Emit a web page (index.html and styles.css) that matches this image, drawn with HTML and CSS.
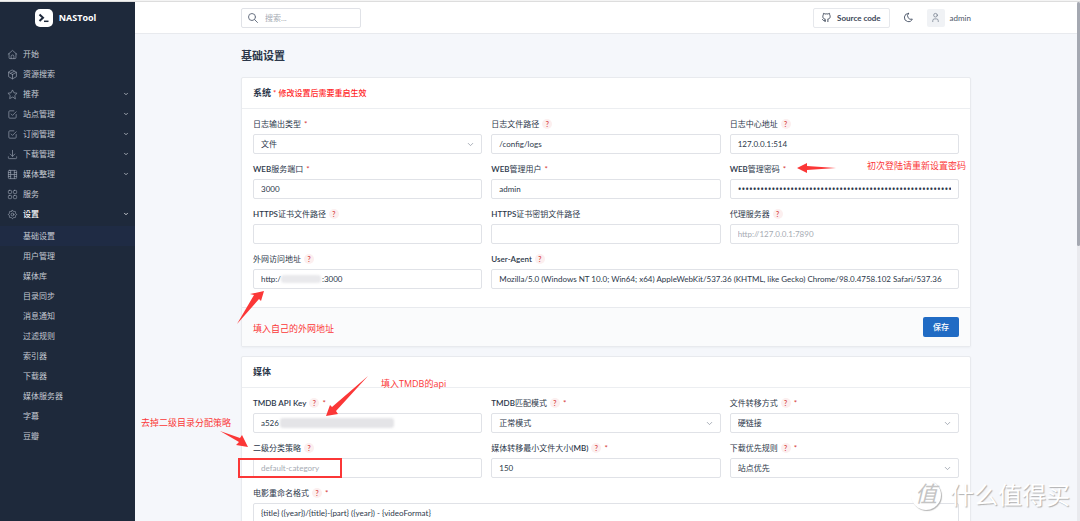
FILE: index.html
```html
<!DOCTYPE html>
<html lang="zh-CN">
<head>
<meta charset="utf-8">
<meta name="viewport" content="width=device-width, initial-scale=1">
<title>NASTool - 基础设置</title>
<link rel="stylesheet" href="styles.css">
</head>
<body>
<svg class="sprite" aria-hidden="true">
  <symbol id="i-chevron" viewBox="0 0 24 24"><path d="M6 9l6 6l6-6"/></symbol>
  <symbol id="i-home" viewBox="0 0 24 24"><path d="M2.500 11.500L12 3l9.500 8.500M4.500 10v9a2 2 0 0 0 2 2h11a2 2 0 0 0 2-2v-9M9 21v-5a3 3 0 0 1 6 0v5"/></symbol>
  <symbol id="i-box" viewBox="0 0 24 24"><path d="M12 2.500l8.500 4.700v9.600L12 21.500l-8.500-4.700V7.200zM12 12l8.500-4.800M12 12v9.500M12 12L3.500 7.200M16 4.800L7.700 9.500"/></symbol>
  <symbol id="i-star" viewBox="0 0 24 24"><path d="M12 17.750l-6.172 3.245l1.179-6.873l-5-4.867l6.900-1l3.086-6.253l3.086 6.253l6.900 1l-5 4.867l1.179 6.873z"/></symbol>
  <symbol id="i-check" viewBox="0 0 24 24"><path d="M9 11l3 3l8-8M20 12v6a2 2 0 0 1-2 2H6a2 2 0 0 1-2-2V6a2 2 0 0 1 2-2h9"/></symbol>
  <symbol id="i-download" viewBox="0 0 24 24"><path d="M3 17v2a2 2 0 0 0 2 2h14a2 2 0 0 0 2-2v-2M7 11l5 5l5-5M12 3v13"/></symbol>
  <symbol id="i-movie" viewBox="0 0 24 24"><path d="M5 3h14a2 2 0 0 1 2 2v14a2 2 0 0 1-2 2H5a2 2 0 0 1-2-2V5a2 2 0 0 1 2-2zM8 3v18M16 3v18M3 12h18M3 7.500h5M3 16.500h5M16 7.500h5M16 16.500h5"/></symbol>
  <symbol id="i-grid" viewBox="0 0 24 24"><rect x="3" y="3" width="7" height="7" rx="2"/><rect x="14" y="3" width="7" height="7" rx="2"/><rect x="3" y="14" width="7" height="7" rx="2"/><rect x="14" y="14" width="7" height="7" rx="2"/></symbol>
  <symbol id="i-gear" viewBox="0 0 24 24"><path d="M10.325 4.317c.426-1.756 2.924-1.756 3.350 0a1.724 1.724 0 0 0 2.573 1.066c1.543-.940 3.310.826 2.370 2.370a1.724 1.724 0 0 0 1.065 2.572c1.756.426 1.756 2.924 0 3.350a1.724 1.724 0 0 0-1.066 2.573c.940 1.543-.826 3.310-2.370 2.370a1.724 1.724 0 0 0-2.572 1.065c-.426 1.756-2.924 1.756-3.350 0a1.724 1.724 0 0 0-2.573-1.066c-1.543.940-3.310-.826-2.370-2.370a1.724 1.724 0 0 0-1.065-2.572c-1.756-.426-1.756-2.924 0-3.350a1.724 1.724 0 0 0 1.066-2.573c-.940-1.543.826-3.310 2.370-2.370c1 .608 2.296.070 2.572-1.065z"/><circle cx="12" cy="12" r="3"/></symbol>
  <symbol id="i-search" viewBox="0 0 24 24"><circle cx="10" cy="10" r="7"/><path d="M21 21l-6-6"/></symbol>
  <symbol id="i-github" viewBox="0 0 24 24"><path d="M9 19c-4.300 1.400-4.300-2.500-6-3m12 5v-3.500c0-1 .1-1.400-.5-2c2.800-.3 5.500-1.400 5.500-6a4.600 4.600 0 0 0-1.300-3.200a4.200 4.200 0 0 0-.1-3.200s-1.100-.3-3.500 1.300a12.300 12.300 0 0 0-6.200 0C6.500 2.800 5.400 3.100 5.400 3.100a4.200 4.200 0 0 0-.1 3.200A4.600 4.600 0 0 0 4 9.500c0 4.600 2.700 5.700 5.500 6c-.6.6-.6 1.200-.5 2V21"/></symbol>
  <symbol id="i-moon" viewBox="0 0 24 24"><path d="M12 3h.393a7.500 7.500 0 0 0 7.920 12.446A9 9 0 1 1 12 2.992z"/></symbol>
  <symbol id="i-user" viewBox="0 0 24 24"><circle cx="12" cy="7" r="4"/><path d="M6 21v-2a4 4 0 0 1 4-4h4a4 4 0 0 1 4 4v2"/></symbol>
</svg>

<div class="window-edge"></div>
<div class="shell">
  <aside class="sidebar">
    <a class="brand" href="#">
      <svg class="brand-logo" viewBox="0 0 18 18" aria-hidden="true"><rect width="18" height="18" rx="5" fill="#fff"/><path d="M4.500 5.500L8 8.800L4.500 12" fill="none" stroke="#1e293b" stroke-width="2"/><path d="M9 12.300h4.500" stroke="#1e293b" stroke-width="1.500"/></svg>
      <span>NASTool</span>
    </a>
    <nav class="menu">
      <a href="#"><svg class="icon"><use href="#i-home"/></svg><span>开始</span></a>
      <a href="#"><svg class="icon"><use href="#i-box"/></svg><span>资源搜索</span></a>
      <a href="#"><svg class="icon"><use href="#i-star"/></svg><span>推荐</span><svg class="caret"><use href="#i-chevron"/></svg></a>
      <a href="#"><svg class="icon"><use href="#i-check"/></svg><span>站点管理</span><svg class="caret"><use href="#i-chevron"/></svg></a>
      <a href="#"><svg class="icon"><use href="#i-check"/></svg><span>订阅管理</span><svg class="caret"><use href="#i-chevron"/></svg></a>
      <a href="#"><svg class="icon"><use href="#i-download"/></svg><span>下载管理</span><svg class="caret"><use href="#i-chevron"/></svg></a>
      <a href="#"><svg class="icon"><use href="#i-movie"/></svg><span>媒体整理</span><svg class="caret"><use href="#i-chevron"/></svg></a>
      <a href="#"><svg class="icon"><use href="#i-grid"/></svg><span>服务</span></a>
      <a class="open" href="#"><svg class="icon"><use href="#i-gear"/></svg><span>设置</span><svg class="caret"><use href="#i-chevron"/></svg></a>
      <div class="submenu">
        <a class="active" href="#">基础设置</a>
        <a href="#">用户管理</a>
        <a href="#">媒体库</a>
        <a href="#">目录同步</a>
        <a href="#">消息通知</a>
        <a href="#">过滤规则</a>
        <a href="#">索引器</a>
        <a href="#">下载器</a>
        <a href="#">媒体服务器</a>
        <a href="#">字幕</a>
        <a href="#">豆瓣</a>
      </div>
    </nav>
  </aside>

  <div class="content">
    <header class="topbar">
      <div class="container topbar-row">
        <label class="search"><svg class="icon"><use href="#i-search"/></svg><input type="text" placeholder="搜索..." aria-label="搜索"></label>
        <div class="tools">
          <a class="source" href="#"><svg class="icon"><use href="#i-github"/></svg>Source code</a>
          <button class="theme" type="button" aria-label="切换主题"><svg class="icon"><use href="#i-moon"/></svg></button>
          <a class="user" href="#"><span class="avatar"><svg class="icon"><use href="#i-user"/></svg></span>admin</a>
        </div>
      </div>
    </header>

    <main class="container page">
      <h1>基础设置</h1>

      <form class="card">
        <div class="card-head"><h2>系统</h2><strong>* 修改设置后需要重启生效</strong></div>
        <div class="card-body">
          <div class="field"><label for="logtype">日志输出类型 <i>*</i></label><div class="pick"><select id="logtype"><option>文件</option></select><svg><use href="#i-chevron"/></svg></div></div>
          <div class="field"><label for="logpath">日志文件路径 <b>?</b></label><input id="logpath" type="text" value="/config/logs"></div>
          <div class="field"><label for="logserver">日志中心地址 <b>?</b></label><input id="logserver" type="text" value="127.0.0.1:514"></div>
          <div class="field"><label for="port"><span><em>WEB</em>服务端口</span> <i>*</i></label><input id="port" type="text" value="3000"></div>
          <div class="field"><label for="webuser"><span><em>WEB</em>管理用户</span> <i>*</i></label><input id="webuser" type="text" value="admin"></div>
          <div class="field"><label for="webpass"><span><em>WEB</em>管理密码</span> <i>*</i></label><input id="webpass" type="password" value="passwordpasswordpasswordpasswordpasswordpasswordpasswordpa"></div>
          <div class="field"><label for="cert"><span><em>HTTPS</em>证书文件路径</span> <b>?</b></label><input id="cert" type="text"></div>
          <div class="field"><label for="certkey"><span><em>HTTPS</em>证书密钥文件路径</span></label><input id="certkey" type="text"></div>
          <div class="field"><label for="proxy">代理服务器 <b>?</b></label><input id="proxy" type="text" placeholder="http://127.0.0.1:7890"></div>
          <div class="field"><label for="domain">外网访问地址 <b>?</b></label><div class="masked"><input id="domain" type="text" value="http:/                    :3000"><span class="smudge smudge-host"></span></div></div>
          <div class="field wide"><label for="agent"><em>User-Agent</em> <b>?</b></label><input id="agent" type="text" value="Mozilla/5.0 (Windows NT 10.0; Win64; x64) AppleWebKit/537.36 (KHTML, like Gecko) Chrome/98.0.4758.102 Safari/537.36"></div>
        </div>
        <div class="card-foot"><button class="save" type="button">保存</button></div>
      </form>

      <form class="card">
        <div class="card-head"><h2>媒体</h2></div>
        <div class="card-body">
          <div class="field"><label for="tmdb"><em>TMDB API Key</em> <b>?</b> <i>*</i></label><div class="masked"><input id="tmdb" type="text" value="a526"><span class="smudge smudge-key"></span></div></div>
          <div class="field"><label for="match"><span><em>TMDB</em>匹配模式</span> <b>?</b> <i>*</i></label><div class="pick"><select id="match"><option>正常模式</option></select><svg><use href="#i-chevron"/></svg></div></div>
          <div class="field"><label for="transfer">文件转移方式 <b>?</b> <i>*</i></label><div class="pick"><select id="transfer"><option>硬链接</option></select><svg><use href="#i-chevron"/></svg></div></div>
          <div class="field"><label for="category">二级分类策略 <b>?</b></label><input id="category" type="text" placeholder="default-category"></div>
          <div class="field"><label for="minsize"><span>媒体转移最小文件大小<em>(MB)</em></span> <b>?</b> <i>*</i></label><input id="minsize" type="text" value="150"></div>
          <div class="field"><label for="order">下载优先规则 <b>?</b> <i>*</i></label><div class="pick"><select id="order"><option>站点优先</option></select><svg><use href="#i-chevron"/></svg></div></div>
          <div class="field full"><label for="movie">电影重命名格式 <b>?</b> <i>*</i></label><input id="movie" type="text" value="{title} ({year})/{title}-{part} ({year}) - {videoFormat}"></div>
        </div>
      </form>

      <svg class="arrows" viewBox="0 0 730 487" aria-hidden="true">
        <path d="M556 134l10-5v3l29 2l-29 2v3z"/>
        <path d="M23 257l-3 10l-2-2L-4 290l17-29l-4-1z"/>
        <path d="M85 382l4-11l2 2L127 342L95 377l2 3z"/>
        <path d="M7 413l-12-2l3-3L-21 397l20 7l2-3z"/>
        <path class="frame" d="M-2 425h102v18h-102z"/>
      </svg>
      <span class="note note-password">初次登陆请重新设置密码</span>
      <span class="note note-domain">填入自己的外网地址</span>
      <span class="note note-key">填入TMDB的api</span>
      <span class="note note-category">去掉二级目录分配策略</span>
    </main>
  </div>
  <div class="scrollbar"><div class="thumb"></div></div>
</div>
<div class="watermark"><span class="seal">值</span><span>什么值得买</span></div>
</body>
</html>
```
FILE: styles.css
```css
* { box-sizing: border-box; }
body {
  margin: 0;
  height: 100vh;
  display: flex;
  flex-direction: column;
  overflow: hidden;
  position: relative;
  background: #f5f7fb;
  color: #2c374a;
  font: 8px/12px Lato, "Noto Sans CJK SC", sans-serif;
}
a { color: inherit; text-decoration: none; }
svg { fill: none; stroke: currentColor; stroke-width: 2; stroke-linecap: round; stroke-linejoin: round; }
input, select, button { font: inherit; color: inherit; }
.sprite { display: none; }
.icon { width: 11px; height: 11px; flex: none; stroke-width: 1.5; }
.window-edge { height: 2px; flex: none; background: #f4f4f4; border-bottom: 1px solid #dddddd; }
.shell { flex: 1; min-height: 0; display: flex; }

.sidebar { width: 135px; flex: none; background: #1e293b; color: #c5cad2; }
.brand { display: flex; align-items: center; justify-content: center; gap: 6px; height: 32px; padding-right: 4px; color: #fff; font-size: 9px; font-family: "Open Sans", sans-serif; font-weight: 700; }
.brand-logo { width: 18px; height: 18px; stroke: none; stroke-linecap: butt; stroke-linejoin: miter; }
.menu { padding-top: 10px; }
.menu a { display: flex; align-items: center; gap: 5px; height: 20px; padding: 0 6px 0 7px; }
.menu .icon { color: #98a1af; }
.caret { width: 6px; height: 6px; margin-left: auto; stroke-width: 3; }
.menu .open { color: #fff; font-weight: 500; }
.submenu { padding-top: 2px; }
.submenu a { padding-left: 23px; }
.submenu .active { background: #1f2b44; }

.content { flex: 1; min-width: 0; overflow: hidden; }
.container { width: 100%; max-width: 730px; margin: 0 auto; }
.topbar { background: #fff; border-bottom: 1px solid #e8eaee; }
.topbar-row { display: flex; align-items: center; justify-content: space-between; height: 31px; }
.search { display: flex; align-items: center; gap: 6px; width: 120px; height: 20px; padding: 0 5px; border: 1px solid #e0e2e7; border-radius: 2px; color: #6b7484; }
.search .icon { width: 12px; height: 12px; stroke-width: 2; }
.search input { width: 100%; min-width: 0; padding: 0; border: 0; outline: 0; background: none; }
::placeholder { color: #a6abb3; opacity: 1; }
.tools { display: flex; align-items: center; gap: 13px; color: #4b5566; }
.source { display: flex; align-items: center; gap: 5px; height: 20px; padding: 0 8px 0 7px; border: 1px solid #e6e8ec; border-radius: 2px; font-weight: 700; color: #3a4557; }
.source .icon, .theme .icon { stroke-width: 2; }
.theme { display: flex; padding: 0; border: 0; background: none; color: #475266; }
.user { display: flex; align-items: center; gap: 5px; }
.avatar { display: grid; place-items: center; width: 18px; height: 18px; border-radius: 2px; background: #f0f2f5; color: #6b7484; }

.page { position: relative; padding-top: 14px; }
h1 { margin: 0 0 13px; font-size: 11px; line-height: 16px; font-weight: 700; }
h2 { margin: 0; font-size: 9px; line-height: 12px; font-weight: 700; }
.card { margin-bottom: 9px; background: #fff; border: 1px solid #e8eaee; border-radius: 2px; box-shadow: 0 1px 2px rgba(30, 41, 59, .04); }
.card-head { display: flex; align-items: center; gap: 2px; height: 31px; padding: 0 11px; border-bottom: 1px solid #eceef1; }
.card-head strong { color: #ff1f1f; font-weight: 500; }
.card-body { display: grid; grid-template-columns: repeat(3, 1fr); gap: 9px; padding: 9px 11px 18px; }
.field { display: grid; gap: 4px; min-width: 0; }
.wide { grid-column: span 2; }
.full { grid-column: 1 / -1; }
.field label { display: flex; align-items: center; gap: 3px; white-space: nowrap; }
.field em { font-style: normal; font-weight: 600; }
.field i { color: #d63939; font-style: normal; }
.field b { display: grid; place-items: center; width: 10px; height: 10px; border-radius: 5px; background: #fcefef; color: #d63939; font-size: 7px; line-height: 10px; font-weight: 600; }
.field input, .field select { grid-area: 1 / 1; width: 100%; height: 20px; padding: 0 7px; border: 1px solid #e0e2e7; border-radius: 2px; background: #fff; outline: 0; appearance: none; }
.field > input { grid-area: auto; }
.field input[type="password"] { font-family: "Open Sans", sans-serif; font-size: 10px; }
.pick, .masked { display: grid; align-items: center; }
.pick svg { grid-area: 1 / 1; justify-self: end; width: 9px; height: 9px; margin-right: 7px; color: #8f97a3; pointer-events: none; }
.smudge { grid-area: 1 / 1; height: 8px; border-radius: 3px; background: #e9e9ec; filter: blur(1px); }
.smudge-host { width: 40px; margin-left: 28px; }
.smudge-key { width: 114px; margin-left: 27px; height: 10px; background: #e4e4e7; }
.card-foot { display: flex; justify-content: flex-end; padding: 9px 11px; border-top: 1px solid #e8eaee; background: #fafbfc; }
.save { width: 36px; height: 20px; padding: 0; border: 0; border-radius: 2px; background: #206bc4; color: #fff; font-weight: 500; }

.arrows { position: absolute; left: 0; top: 0; width: 730px; height: 487px; overflow: visible; fill: #fb3737; stroke: none; pointer-events: none; }
.arrows .frame { fill: none; stroke: #fb3737; stroke-width: 2; stroke-linejoin: miter; }
.note { position: absolute; color: #fb3737; font-size: 9px; line-height: 12px; white-space: nowrap; }
.note-password { left: 626px; top: 126px; }
.note-domain { left: 12px; top: 289px; }
.note-key { left: 140px; top: 344px; font-family: "Open Sans", "Noto Sans CJK SC", sans-serif; }
.note-category { left: -100px; top: 383px; }

.scrollbar { width: 3px; flex: none; background: #e9eaee; }
.thumb { height: 47%; border-radius: 2px; background: #a4a8b1; }

.watermark { position: absolute; right: 10px; bottom: 8px; display: flex; align-items: center; gap: 9px; color: #fff; font-size: 24px; line-height: 36px; text-shadow: 1px 1px 1px #b0b0b0; }
.seal { width: 30px; height: 30px; border-radius: 50%; background: #fff; box-shadow: 1px 1px 1px #b5b5b5; color: #c4c4c4; font-size: 22px; line-height: 28px; font-style: italic; text-align: center; text-shadow: none; }
```
